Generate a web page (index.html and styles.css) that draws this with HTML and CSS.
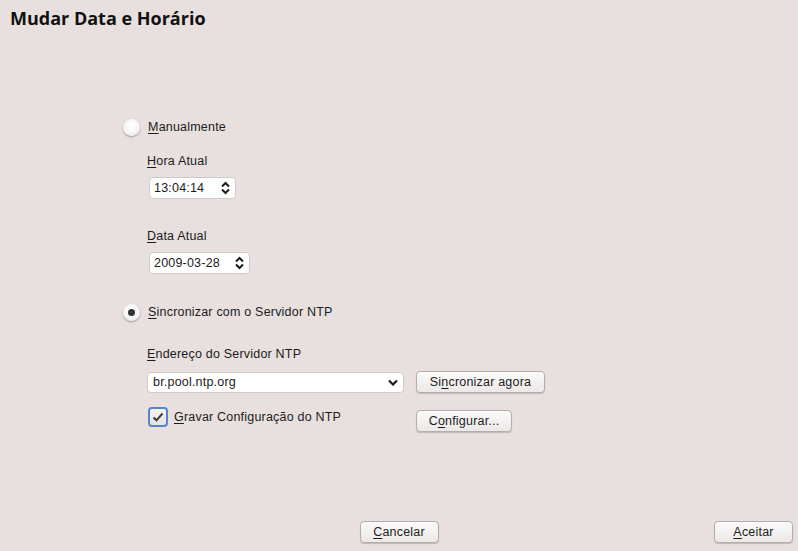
FILE: index.html
```html
<!DOCTYPE html>
<html lang="pt-BR">
<head>
<meta charset="utf-8">
<title>Mudar Data e Horário</title>
<link rel="stylesheet" href="styles.css">
</head>
<body>
<div class="page">
  <h1 class="title">Mudar Data e Horário</h1>
  <div class="content">
    <div class="radio-row first">
      <span class="radio"></span>
      <span class="label"><u>M</u>anualmente</span>
    </div>
    <div class="field-label hora"><u>H</u>ora Atual</div>
    <div class="spin spin-time">
      <span class="spin-text">13:04:14</span>
      <svg class="spin-arrows" width="9" height="14" viewBox="0 0 9 14"><path d="M1 5.5 L4.5 2 L8 5.5 M1 8.5 L4.5 12 L8 8.5" fill="none" stroke="#1a1a1a" stroke-width="2"/></svg>
    </div>
    <div class="field-label data"><u>D</u>ata Atual</div>
    <div class="spin spin-date">
      <span class="spin-text">2009-03-28</span>
      <svg class="spin-arrows" width="9" height="14" viewBox="0 0 9 14"><path d="M1 5.5 L4.5 2 L8 5.5 M1 8.5 L4.5 12 L8 8.5" fill="none" stroke="#1a1a1a" stroke-width="2"/></svg>
    </div>
    <div class="radio-row second">
      <span class="radio checked"></span>
      <span class="label"><u>S</u>incronizar com o Servidor NTP</span>
    </div>
    <div class="field-label endereco"><u>E</u>ndereço do Servidor NTP</div>
    <div class="ntp-row">
      <div class="combo">
        <span class="combo-text">br.pool.ntp.org</span>
        <svg class="combo-arrow" width="10" height="7" viewBox="0 0 10 7"><path d="M1 1.5 L5 5.5 L9 1.5" fill="none" stroke="#1a1a1a" stroke-width="2.2"/></svg>
      </div>
      <button class="btn btn-sync">Si<u>n</u>cronizar agora</button>
    </div>
    <div class="save-row">
      <div class="check-group">
        <span class="checkbox">
          <svg width="12" height="10" viewBox="0 0 12 10"><path d="M1.5 5.5 L4.5 8.3 L10.5 1.5" fill="none" stroke="#3c3c3c" stroke-width="2"/></svg>
        </span>
        <span class="label"><u>G</u>ravar Configuração do NTP</span>
      </div>
      <button class="btn btn-config">C<u>o</u>nfigurar...</button>
    </div>
  </div>
  <div class="footer">
    <div></div>
    <button class="btn btn-foot"><u>C</u>ancelar</button>
    <div class="foot-right"><button class="btn btn-foot"><u>A</u>ceitar</button></div>
  </div>
</div>
</body>
</html>
```
FILE: styles.css
```css
html, body {
  margin: 0;
  padding: 0;
  background: #e7e0de;
}
body {
  font-family: "Liberation Sans", Arial, sans-serif;
  font-size: 12.5px;
  letter-spacing: 0.2px;
  color: #1c1c1c;
}
.page {
  height: 551px;
  display: flex;
  flex-direction: column;
  box-sizing: border-box;
}
u {
  text-decoration: underline;
  text-underline-offset: 2px;
}
.title {
  margin: 0;
  padding: 6px 10px 0;
  height: 24px;
  font-family: "Open Sans", sans-serif;
  font-weight: 700;
  font-size: 18px;
  letter-spacing: 0;
  line-height: 24px;
  color: #111;
}
.content {
  padding-left: 123px;
}
.radio-row {
  display: flex;
  align-items: center;
  height: 20px;
  gap: 8px;
}
.radio-row.first { margin-top: 87px; }
.radio-row.second { margin-top: 28px; }
.radio {
  width: 17px;
  height: 17px;
  border-radius: 50%;
  box-sizing: border-box;
  background: radial-gradient(circle at 50% 40%, #ffffff 0%, #f6f5f5 55%, #dcd8d7 100%);
  box-shadow: 0 1px 2px rgba(0,0,0,0.35);
  position: relative;
  flex: none;
}
.radio.checked::after {
  content: "";
  position: absolute;
  left: 5px;
  top: 5px;
  width: 7px;
  height: 7px;
  border-radius: 50%;
  background: #333;
}
.field-label {
  margin-left: 24px;
  height: 16px;
  line-height: 16px;
}
.field-label.hora { margin-top: 16px; }
.field-label.data { margin-top: 29px; }
.field-label.endereco { margin-top: 24px; }
.spin {
  margin-left: 26px;
  margin-top: 8px;
  height: 22px;
  box-sizing: border-box;
  background: #fff;
  border: 1px solid #cfc9c7;
  border-radius: 4px;
  display: flex;
  align-items: center;
  justify-content: space-between;
  padding: 0 5px 0 4px;
}
.spin-time { width: 87px; }
.spin-date { width: 101px; }
.spin-arrows { flex: none; }
.ntp-row {
  margin-top: 9px;
  margin-left: 24px;
  display: flex;
  align-items: center;
  gap: 12px;
}
.combo {
  width: 257px;
  height: 21px;
  box-sizing: border-box;
  background: #fff;
  border: 1px solid #cfc9c7;
  border-radius: 4px;
  display: flex;
  align-items: center;
  justify-content: space-between;
  padding: 0 5px 0 5px;
}
.combo-arrow { flex: none; }
.btn {
  font-family: "Liberation Sans", Arial, sans-serif;
  font-size: 12.5px;
  letter-spacing: 0.2px;
  color: #1c1c1c;
  height: 22px;
  box-sizing: border-box;
  border: 1px solid #b3adab;
  border-radius: 4px;
  background: linear-gradient(#fbfafa, #ebe8e7);
  box-shadow: 0 1px 1px rgba(0,0,0,0.18);
  padding: 0;
  margin: 0;
}
.btn-sync { width: 129px; }
.btn-config { width: 96px; margin-top: 4px; }
.save-row {
  margin-top: 13px;
  margin-left: 25px;
  display: flex;
  align-items: flex-start;
  gap: 11px;
}
.check-group {
  width: 257px;
  display: flex;
  align-items: center;
  gap: 6px;
  height: 21px;
}
.checkbox {
  width: 20px;
  height: 20px;
  box-sizing: border-box;
  border: 2px solid #5584c9;
  border-radius: 4px;
  background: linear-gradient(#f6f5f5, #e4e1e0);
  display: flex;
  align-items: center;
  justify-content: center;
  flex: none;
}
.footer {
  margin-top: auto;
  padding: 0 5px 8px;
  display: grid;
  grid-template-columns: 1fr auto 1fr;
  align-items: end;
}
.foot-right {
  display: flex;
  justify-content: flex-end;
}
.btn-foot { width: 79px; }
```
